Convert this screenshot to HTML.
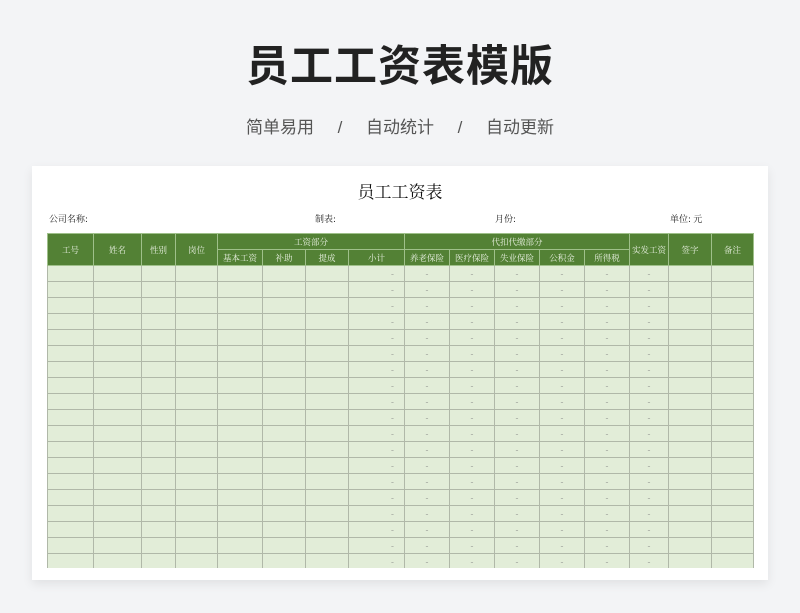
<!DOCTYPE html>
<html><head><meta charset="utf-8"><style>
body{margin:0;width:800px;height:613px;background:#f3f4f6;font-family:"Liberation Sans","Noto Sans CJK SC",sans-serif;position:relative;overflow:hidden}
.t{position:absolute;top:32px;left:0;width:800px;text-align:center;font-size:43px;font-weight:bold;color:#222;letter-spacing:1px}
.s{position:absolute;top:113px;left:0;width:800px;text-align:center;font-size:17px;color:#555;word-spacing:0}
.card{position:absolute;left:32px;top:166px;width:736px;height:414px;background:#fff;box-shadow:0 4px 10px rgba(0,0,0,.08)}
.ct{position:absolute;top:178px;left:0;width:800px;text-align:center;font-size:17px;font-family:"Noto Serif CJK SC",serif;color:#111}
.m{position:absolute;top:212px;font-size:9px;font-family:"Noto Serif CJK SC",serif;color:#222}
table{position:absolute;left:47px;top:233px;border-collapse:collapse;table-layout:fixed;font-family:"Noto Serif CJK SC",serif;font-size:8.5px}
td{border:1px solid #b0b8a8;padding:0;height:15px;text-align:center;color:#777;background:#e2edd8;overflow:hidden;white-space:nowrap}
tr.h td{background:#538135;color:#e8f0e0;border-color:#9fc08a}
td.r{text-align:right;padding-right:10px}
</style></head><body>
<div class="t">员工工资表模版</div>
<div class="s">简单易用&nbsp;&nbsp;&nbsp;&nbsp;&nbsp;/&nbsp;&nbsp;&nbsp;&nbsp;&nbsp;自动统计&nbsp;&nbsp;&nbsp;&nbsp;&nbsp;/&nbsp;&nbsp;&nbsp;&nbsp;&nbsp;自动更新</div>
<div class="card"></div>
<div class="ct">员工工资表</div>
<div class="m" style="left:49px">公司名称:</div>
<div class="m" style="left:315px">制表:</div>
<div class="m" style="left:495px">月份:</div>
<div class="m" style="left:670px">单位: 元</div>
<table>
<colgroup><col style="width:46px"><col style="width:48px"><col style="width:34px"><col style="width:42px"><col style="width:45px"><col style="width:43px"><col style="width:43px"><col style="width:56px"><col style="width:45px"><col style="width:45px"><col style="width:45px"><col style="width:45px"><col style="width:45px"><col style="width:39px"><col style="width:43px"><col style="width:42px"></colgroup>
<tr class="h"><td rowspan="2">工号</td><td rowspan="2">姓名</td><td rowspan="2">性别</td><td rowspan="2">岗位</td><td colspan="4">工资部分</td><td colspan="5">代扣代缴部分</td><td rowspan="2">实发工资</td><td rowspan="2">签字</td><td rowspan="2">备注</td></tr>
<tr class="h"><td>基本工资</td><td>补助</td><td>提成</td><td>小计</td><td>养老保险</td><td>医疗保险</td><td>失业保险</td><td>公积金</td><td>所得税</td></tr>
<tr><td></td><td></td><td></td><td></td><td></td><td></td><td></td><td class="r">-</td><td>-</td><td>-</td><td>-</td><td>-</td><td>-</td><td>-</td><td></td><td></td></tr>
<tr><td></td><td></td><td></td><td></td><td></td><td></td><td></td><td class="r">-</td><td>-</td><td>-</td><td>-</td><td>-</td><td>-</td><td>-</td><td></td><td></td></tr>
<tr><td></td><td></td><td></td><td></td><td></td><td></td><td></td><td class="r">-</td><td>-</td><td>-</td><td>-</td><td>-</td><td>-</td><td>-</td><td></td><td></td></tr>
<tr><td></td><td></td><td></td><td></td><td></td><td></td><td></td><td class="r">-</td><td>-</td><td>-</td><td>-</td><td>-</td><td>-</td><td>-</td><td></td><td></td></tr>
<tr><td></td><td></td><td></td><td></td><td></td><td></td><td></td><td class="r">-</td><td>-</td><td>-</td><td>-</td><td>-</td><td>-</td><td>-</td><td></td><td></td></tr>
<tr><td></td><td></td><td></td><td></td><td></td><td></td><td></td><td class="r">-</td><td>-</td><td>-</td><td>-</td><td>-</td><td>-</td><td>-</td><td></td><td></td></tr>
<tr><td></td><td></td><td></td><td></td><td></td><td></td><td></td><td class="r">-</td><td>-</td><td>-</td><td>-</td><td>-</td><td>-</td><td>-</td><td></td><td></td></tr>
<tr><td></td><td></td><td></td><td></td><td></td><td></td><td></td><td class="r">-</td><td>-</td><td>-</td><td>-</td><td>-</td><td>-</td><td>-</td><td></td><td></td></tr>
<tr><td></td><td></td><td></td><td></td><td></td><td></td><td></td><td class="r">-</td><td>-</td><td>-</td><td>-</td><td>-</td><td>-</td><td>-</td><td></td><td></td></tr>
<tr><td></td><td></td><td></td><td></td><td></td><td></td><td></td><td class="r">-</td><td>-</td><td>-</td><td>-</td><td>-</td><td>-</td><td>-</td><td></td><td></td></tr>
<tr><td></td><td></td><td></td><td></td><td></td><td></td><td></td><td class="r">-</td><td>-</td><td>-</td><td>-</td><td>-</td><td>-</td><td>-</td><td></td><td></td></tr>
<tr><td></td><td></td><td></td><td></td><td></td><td></td><td></td><td class="r">-</td><td>-</td><td>-</td><td>-</td><td>-</td><td>-</td><td>-</td><td></td><td></td></tr>
<tr><td></td><td></td><td></td><td></td><td></td><td></td><td></td><td class="r">-</td><td>-</td><td>-</td><td>-</td><td>-</td><td>-</td><td>-</td><td></td><td></td></tr>
<tr><td></td><td></td><td></td><td></td><td></td><td></td><td></td><td class="r">-</td><td>-</td><td>-</td><td>-</td><td>-</td><td>-</td><td>-</td><td></td><td></td></tr>
<tr><td></td><td></td><td></td><td></td><td></td><td></td><td></td><td class="r">-</td><td>-</td><td>-</td><td>-</td><td>-</td><td>-</td><td>-</td><td></td><td></td></tr>
<tr><td></td><td></td><td></td><td></td><td></td><td></td><td></td><td class="r">-</td><td>-</td><td>-</td><td>-</td><td>-</td><td>-</td><td>-</td><td></td><td></td></tr>
<tr><td></td><td></td><td></td><td></td><td></td><td></td><td></td><td class="r">-</td><td>-</td><td>-</td><td>-</td><td>-</td><td>-</td><td>-</td><td></td><td></td></tr>
<tr><td></td><td></td><td></td><td></td><td></td><td></td><td></td><td class="r">-</td><td>-</td><td>-</td><td>-</td><td>-</td><td>-</td><td>-</td><td></td><td></td></tr>
<tr><td></td><td></td><td></td><td></td><td></td><td></td><td></td><td class="r">-</td><td>-</td><td>-</td><td>-</td><td>-</td><td>-</td><td>-</td><td></td><td></td></tr>
</table>
<div style="position:absolute;left:40px;top:568px;width:720px;height:11px;background:#fff"></div>
</body></html>
